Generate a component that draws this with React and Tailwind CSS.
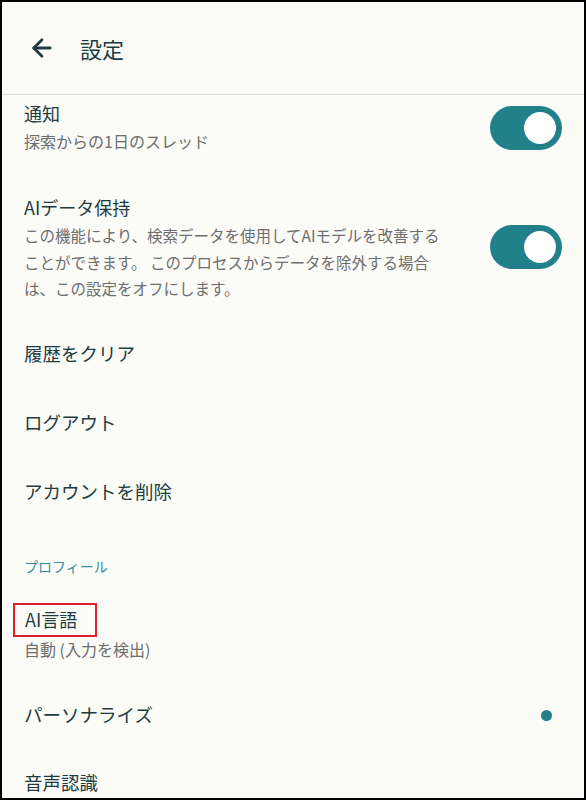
import { ArrowLeft } from "lucide-react";

const Toggle = ({ className = "" }) => (
  <div className={"w-[72px] h-[44px] rounded-full bg-[#22808b] flex items-center justify-end pr-[6px] shrink-0 " + className}>
    <div className="w-[32px] h-[32px] rounded-full bg-white" />
  </div>
);

const Row = ({ title, className = "" }) => (
  <div className={"h-[69px] flex items-center px-[22px] text-[18.5px] text-[#1e3b3f] " + className}>
    {title}
  </div>
);

const App = () => {
  return (
    <section
      className="w-[586px] h-[800px] overflow-hidden bg-[#fbfbf8] border-2 border-black"
      style={{ fontFamily: '"Noto Sans CJK JP", "Noto Sans", sans-serif' }}
    >
      <div className="flex flex-col">
        <div className="h-[93px] flex items-center pl-[26px] gap-[24px] border-b border-[#dddddd]">
          <ArrowLeft size={28} strokeWidth={2.4} className="text-[#1e3b3f]" />
          <h1 className="text-[22px] text-[#1e3b3f]">設定</h1>
        </div>

        <div className="flex items-center justify-between pl-[22px] pr-[22px] pt-[5px]">
          <div className="flex flex-col">
            <p className="text-[18px] leading-[26px] text-[#1e3b3f]">通知</p>
            <p className="mt-[2px] text-[16px] leading-[26px] text-[#6e6e6e]">探索からの1日のスレッド</p>
          </div>
          <Toggle className="mt-[2px]" />
        </div>

        <div className="flex items-center justify-between pl-[22px] pr-[22px] mt-[39px] gap-[16px]">
          <div className="flex flex-col">
            <p className="text-[18px] leading-[28px] text-[#1e3b3f]">AIデータ保持</p>
            <p className="mt-[1px] text-[15.5px] leading-[26.5px] text-[#6e6e6e] whitespace-nowrap">
              この機能により、検索データを使用してAIモデルを改善する
              <br />
              ことができます。 このプロセスからデータを除外する場合
              <br />
              は、この設定をオフにします。
            </p>
          </div>
          <Toggle />
        </div>

        <div className="mt-[18px]">
          <Row title="履歴をクリア" />
          <Row title="ログアウト" />
          <Row title="アカウントを削除" />
        </div>

        <p className="px-[22px] mt-[29px] text-[14px] text-[#3a8e99]">プロフィール</p>

        <div className="px-[11px] mt-[26px] flex flex-col">
          <span className="self-start border-2 border-[#e0202a] pl-[10px] pr-[18px] h-[34px] flex items-center text-[18px] text-[#1e3b3f]">
            AI言語
          </span>
          <p className="px-[11px] text-[16px] leading-[24px] text-[#6e6e6e]">自動 (入力を検出)</p>
        </div>

        <div className="h-[69px] mt-[20px] flex items-center justify-between pl-[22px] pr-[32px] text-[18.5px] text-[#1e3b3f]">
          <span>パーソナライズ</span>
          <span className="w-[11px] h-[11px] rounded-full bg-[#22808b]" />
        </div>
        <Row title="音声認識" className="-mt-[1px]" />
      </div>
    </section>
  );
};

export default App;
